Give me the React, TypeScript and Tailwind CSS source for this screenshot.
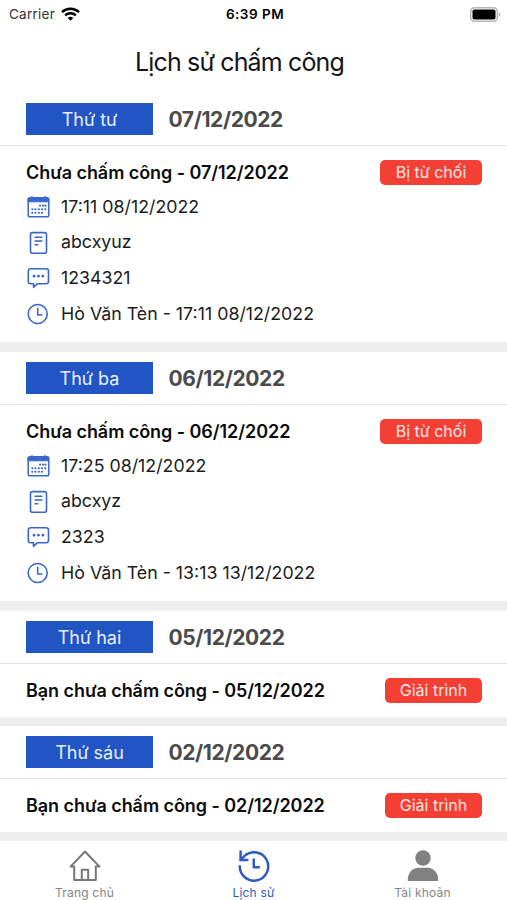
import React from "react";

type Entry = {
  day: string;
  date: string;
  title: string;
  status: string;
  details?: [string, string, string, string];
};

const entries: Entry[] = [
  {
    day: "Thứ tư",
    date: "07/12/2022",
    title: "Chưa chấm công - 07/12/2022",
    status: "Bị từ chối",
    details: ["17:11 08/12/2022", "abcxyuz", "1234321", "Hò Văn Tèn - 17:11 08/12/2022"],
  },
  {
    day: "Thứ ba",
    date: "06/12/2022",
    title: "Chưa chấm công - 06/12/2022",
    status: "Bị từ chối",
    details: ["17:25 08/12/2022", "abcxyz", "2323", "Hò Văn Tèn - 13:13 13/12/2022"],
  },
  { day: "Thứ hai", date: "05/12/2022", title: "Bạn chưa chấm công - 05/12/2022", status: "Giải trình" },
  { day: "Thứ sáu", date: "02/12/2022", title: "Bạn chưa chấm công - 02/12/2022", status: "Giải trình" },
];

const iconProps = {
  width: 24,
  height: 24,
  viewBox: "0 0 24 24",
  fill: "none",
  stroke: "currentColor",
  strokeWidth: 1.6,
  strokeLinecap: "round" as const,
  strokeLinejoin: "round" as const,
};

function CalendarIcon() {
  return (
    <svg {...iconProps}>
      <rect x="2.2" y="2.8" width="20.6" height="19" rx="1.8" strokeWidth="1.5" />
      <path d="M2.4 3.4h20.200v3.400H2.400z" fill="currentColor" strokeWidth="1" />
      <path d="M6 1.800v1.600M19 1.800v1.600" strokeWidth="1.500" />
      <path
        d="M14 10.600h.1M17 10.600h.1M19.400 10.600h.1M6.300 14.200h.1M9.400 14.200h.1M12.800 14.200h.1M16 14.200h.1M19.200 14.200h.1M6.300 17.800h.1M9.400 17.800h.1M12.800 17.800h.1M16 17.800h.1"
        strokeWidth="2.100"
      />
    </svg>
  );
}

function NoteIcon() {
  return (
    <svg {...iconProps}>
      <rect x="4.500" y="1.600" width="16" height="20.600" rx="2" />
      <path d="M9.100 6.300h6.800M9.100 10h6.800M9.100 13.800h2.600" />
    </svg>
  );
}

function ChatIcon() {
  return (
    <svg {...iconProps}>
      <path d="M4.700 2.700h15.400a2.400 2.400 0 0 1 2.400 2.400v10.200a2.400 2.400 0 0 1-2.400 2.400H11.400l-3.900 3.600v-3.600H4.700a2.400 2.400 0 0 1-2.400-2.400V5.100a2.400 2.400 0 0 1 2.400-2.400z" />
      <path d="M8 10.200h.1M12.400 10.200h.1M16.800 10.200h.1" strokeWidth="2.800" />
    </svg>
  );
}

function ClockIcon() {
  return (
    <svg {...iconProps}>
      <circle cx="11.700" cy="12" r="9.500" />
      <path d="M11.700 6.400V13h4.200" />
    </svg>
  );
}

const detailIcons = [CalendarIcon, NoteIcon, ChatIcon, ClockIcon];

function StatusBar() {
  return (
    <div className="flex h-7 items-center pl-[9px] pr-[6px] text-[13.5px]">
      <div className="flex flex-1 items-center gap-[6px]">
        <span className="tracking-[0.25px] text-[#333]">Carrier</span>
        <svg width="19" height="14" viewBox="0 0 19 14" fill="none" stroke="#000">
          <path d="M1 5.200a12.400 12.400 0 0 1 17 0" strokeWidth="2.500" />
          <path d="M4.100 8.400a7.800 7.800 0 0 1 10.800 0" strokeWidth="2.300" />
          <path d="M6.700 11a4 4 0 0 1 5.600 0L9.500 13.800z" fill="#000" stroke="none" />
        </svg>
      </div>
      <span className="font-semibold tracking-[0.5px] text-black">6:39 PM</span>
      <div className="flex flex-1 items-center justify-end">
        <svg width="31" height="15" viewBox="0 0 31 15">
          <rect x="0.700" y="0.700" width="26.600" height="13.600" rx="3.800" fill="#fff" stroke="#b5b5b5" strokeWidth="1.400" />
          <rect x="2.500" y="2.500" width="23" height="10" rx="1.800" fill="#000" />
          <path d="M28.800 5.200c2 .6 2 4 0 4.600z" fill="#b5b5b5" />
        </svg>
      </div>
    </div>
  );
}

function Section({ entry }: { entry: Entry }) {
  return (
    <section>
      <div className="flex h-[53px] items-center border-b border-[#e4e4e4] pl-[26px]">
        <div className="flex h-8 w-[127px] items-center justify-center bg-[#2255c4] text-[18px] text-[#e9effb]">
          {entry.day}
        </div>
        <span className="ml-[15.5px] pt-[2px] text-[21px] font-bold tracking-[-0.4px] text-[#4b4b4b]">{entry.date}</span>
      </div>
      <div className={entry.details ? "h-[196px]" : "h-[53px]"}>
        <div className="flex h-[53px] items-center justify-between pl-[26px] pr-[25px]">
          <span className="pb-px text-[18px] font-semibold tracking-[-0.06px] text-[#0c0c0c]">{entry.title}</span>
          <span
            className={`mb-px flex h-[25px] items-center justify-center rounded-[5px] bg-[#f44034] text-[16px] text-[#fde8e6] ${
              entry.details ? "w-[102px]" : "w-[97px]"
            }`}
          >
            {entry.status}
          </span>
        </div>
        {entry.details && (
          <ul className="-mt-[10px]">
            {entry.details.map((text, i) => {
              const Icon = detailIcons[i];
              return (
                <li key={i} className="flex h-[35.8px] items-center gap-[11px] pl-[26px] text-[17.8px] text-[#1c1c1c]">
                  <span className="text-[#3a67c9]">
                    <Icon />
                  </span>
                  <span>{text}</span>
                </li>
              );
            })}
          </ul>
        )}
      </div>
    </section>
  );
}

function TabBar() {
  return (
    <nav className="grid h-[59px] grid-cols-3 text-[12px] tracking-[0.2px] text-[#858585]">
      <div className="flex flex-col items-center pt-2">
        <svg width="32" height="34" viewBox="0 0 32 34" fill="none" stroke="#777" strokeWidth="2" strokeLinejoin="round">
          <path d="M16 2.500L1.500 17.600h3.700v13.500h21.600V17.600h3.700z" />
          <path d="M12.800 31V20.700h6.400V31" />
        </svg>
        <span className="pt-[2px] leading-4">Trang chủ</span>
      </div>
      <div className="flex flex-col items-center pt-2 text-[#2f5cc0]">
        <svg width="32" height="34" viewBox="0 0 32 34" fill="none" stroke="currentColor" strokeWidth="2.500" strokeLinecap="round" strokeLinejoin="round">
          <path d="M1.800 17.200a14.200 14.200 0 1 0 5-10.600L2.600 11" />
          <path d="M2.600 2.500V11h6.800" />
          <path d="M15.800 10.500v7.800h5" />
        </svg>
        <span className="pt-[2px] leading-4">Lịch sử</span>
      </div>
      <div className="flex flex-col items-center pt-2">
        <svg width="32" height="34" viewBox="0 0 32 34" fill="#818181">
          <circle cx="16" cy="9" r="7.700" />
          <path d="M.8 32v-1.500c0-6.500 4.600-11.700 10.500-11.700h9.400c5.900 0 10.500 5.200 10.500 11.700V32z" />
        </svg>
        <span className="pt-[2px] leading-4">Tài khoản</span>
      </div>
    </nav>
  );
}

export default function App() {
  return (
    <div className="flex h-[900px] w-[507px] flex-col overflow-hidden bg-white font-['Inter','Liberation_Sans',sans-serif]">
      <StatusBar />
      <h1 className="flex h-[65px] items-center justify-center pr-[28px] pt-[4px] text-[25px] tracking-[-0.85px] text-[#151515]">
        Lịch sử chấm công
      </h1>
      <main>
        {entries.map((entry) => (
          <React.Fragment key={entry.date}>
            <Section entry={entry} />
            <div className={entry.details ? "h-[10px] bg-[#eeeeee]" : "h-[9px] bg-[#eeeeee]"} />
          </React.Fragment>
        ))}
      </main>
      <TabBar />
    </div>
  );
}
